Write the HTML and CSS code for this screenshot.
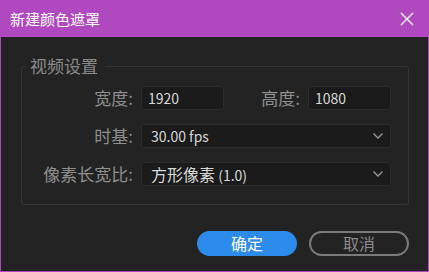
FILE: index.html
```html
<!DOCTYPE html>
<html lang="zh">
<head>
<meta charset="utf-8">
<link rel="stylesheet" href="styles.css">
</head>
<body>
<div class="window">
  <div class="titlebar">
    <span class="title">新建颜色遮罩</span>
    <span class="close">
      <svg width="14" height="14" viewBox="0 0 14 14"><path d="M1 1 L13 13 M13 1 L1 13" stroke="#ffffff" stroke-width="1.3" fill="none"/></svg>
    </span>
  </div>
  <div class="content">
    <fieldset class="group">
      <legend>视频设置</legend>
      <div class="grid">
        <label class="lbl">宽度:</label>
        <div class="field">1920</div>
        <label class="lbl">高度:</label>
        <div class="field">1080</div>
        <label class="lbl">时基:</label>
        <div class="select"><span class="val">30.00 fps</span><svg class="chev" width="10" height="6" viewBox="0 0 10 6"><path d="M0.5 0.5 L5 5 L9.5 0.5" stroke="#9a9a9a" stroke-width="1.3" fill="none"/></svg></div>
        <label class="lbl">像素长宽比:</label>
        <div class="select"><span class="val"><span class="cjk">方形像素</span> (1.0)</span><svg class="chev" width="10" height="6" viewBox="0 0 10 6"><path d="M0.5 0.5 L5 5 L9.5 0.5" stroke="#9a9a9a" stroke-width="1.3" fill="none"/></svg></div>
      </div>
    </fieldset>
    <div class="buttons">
      <button class="btn primary">确定</button>
      <button class="btn secondary">取消</button>
    </div>
  </div>
</div>
</body>
</html>
```

FILE: styles.css
```css
html, body {
  margin: 0;
  padding: 0;
  background: #232323;
}
body {
  font-family: "Noto Sans CJK SC", "Noto Sans", sans-serif;
}
.window {
  width: 429px;
  height: 272px;
  box-sizing: border-box;
  display: flex;
  flex-direction: column;
  background: #232323;
  border: 1px solid #b048c0;
  border-top: none;
}
.titlebar {
  height: 37px;
  margin: 0 -1px;
  background: #b048c0;
  display: flex;
  align-items: center;
  justify-content: space-between;
  padding: 0 15px 0 10px;
}
.title {
  color: #ffffff;
  font-size: 15px;
  line-height: 18px;
}
.close {
  display: flex;
  margin-top: 1px;
}
.content {
  flex: 1;
  display: flex;
  flex-direction: column;
}
.group {
  margin: 19px 19px 0 20px;
  padding: 10px 17px 18px 0;
  border: 1px solid #343434;
  border-radius: 3px;
  min-width: 0;
}
.group legend {
  margin-left: 4px;
  padding: 0 8px 0 4px;
  color: #8a8a8a;
  font-size: 17px;
  line-height: 20px;
}
.grid {
  display: grid;
  grid-template-columns: 111px 83px 1fr 83px;
  column-gap: 8px;
  row-gap: 14px;
  align-items: center;
}
.lbl {
  text-align: right;
  color: #8e8e8e;
  font-size: 17px;
  line-height: 24px;
}
.field, .select {
  height: 24px;
  box-sizing: border-box;
  background: #1b1b1b;
  border: 1px solid #2c2c2c;
  border-radius: 3px;
  color: #d8d8d8;
  font-size: 14px;
  line-height: 22px;
  padding: 0 6px;
}
.select {
  grid-column: 2 / 5;
  display: flex;
  align-items: center;
  justify-content: space-between;
  padding: 0 7px 0 9px;
}
.select .val {
  font-size: 14px;
}
.cjk {
  font-size: 16px;
}
.chev {
  display: block;
}
.buttons {
  display: flex;
  justify-content: flex-end;
  gap: 12px;
  margin: 26px 19px 0 0;
}
.btn {
  width: 100px;
  height: 25px;
  border-radius: 13px;
  font-family: "Noto Sans CJK SC", "Noto Sans", sans-serif;
  font-size: 16px;
  line-height: 21px;
  padding: 0;
  box-sizing: border-box;
}
.primary {
  background: #2d8ceb;
  border: none;
  color: #ffffff;
}
.secondary {
  background: transparent;
  border: 2px solid #7b7b7b;
  color: #8a8a8a;
}
```
